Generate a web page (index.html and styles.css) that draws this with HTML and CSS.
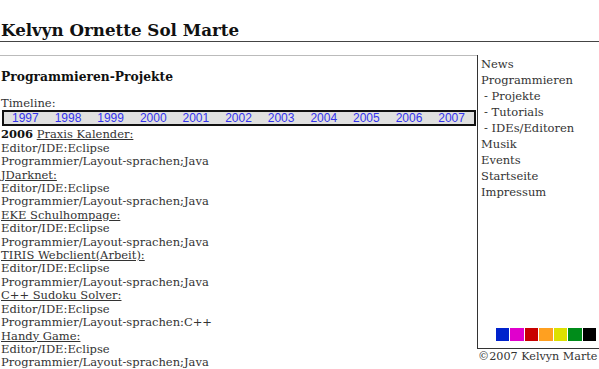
FILE: index.html
```html
<!DOCTYPE html>
<html lang="de">
<head>
  <meta charset="UTF-8">
  <title>Kelvyn Ornette Sol Marte - Programmieren-Projekte</title>
  <link rel="stylesheet" href="styles.css">
</head>
<body>
  <h1 class="site-title">Kelvyn Ornette Sol Marte</h1>
  <div class="page">
    <div class="content">
      <h2>Programmieren-Projekte</h2>
      <div class="timeline-label">Timeline:</div>
      <div class="timeline">
        <a href="#">1997</a>
        <a href="#">1998</a>
        <a href="#">1999</a>
        <a href="#">2000</a>
        <a href="#">2001</a>
        <a href="#">2002</a>
        <a href="#">2003</a>
        <a href="#">2004</a>
        <a href="#">2005</a>
        <a href="#">2006</a>
        <a href="#">2007</a>
      </div>
      <div class="projects">
        <div class="project">
          <b>2006</b> <a href="#">Praxis Kalender:</a><br>
          Editor/IDE:Eclipse<br>
          Programmier/Layout-sprachen;Java
        </div>
        <div class="project">
          <a href="#">JDarknet:</a><br>
          Editor/IDE:Eclipse<br>
          Programmier/Layout-sprachen;Java
        </div>
        <div class="project">
          <a href="#">EKE Schulhompage:</a><br>
          Editor/IDE:Eclipse<br>
          Programmier/Layout-sprachen;Java
        </div>
        <div class="project">
          <a href="#">TIRIS Webclient(Arbeit):</a><br>
          Editor/IDE:Eclipse<br>
          Programmier/Layout-sprachen;Java
        </div>
        <div class="project">
          <a href="#">C++ Sudoku Solver:</a><br>
          Editor/IDE:Eclipse<br>
          Programmier/Layout-sprachen:C++
        </div>
        <div class="project">
          <a href="#">Handy Game:</a><br>
          Editor/IDE:Eclipse<br>
          Programmier/Layout-sprachen;Java
        </div>
      </div>
    </div>
    <div class="side">
      <div class="menu">
        <ul>
          <li><a href="#">News</a></li>
          <li><a href="#">Programmieren</a></li>
          <li class="sub"><a href="#">- Projekte</a></li>
          <li class="sub"><a href="#">- Tutorials</a></li>
          <li class="sub"><a href="#">- IDEs/Editoren</a></li>
          <li><a href="#">Musik</a></li>
          <li><a href="#">Events</a></li>
          <li><a href="#">Startseite</a></li>
          <li><a href="#">Impressum</a></li>
        </ul>
        <div class="colors">
          <span class="c-blue"></span>
          <span class="c-magenta"></span>
          <span class="c-red"></span>
          <span class="c-orange"></span>
          <span class="c-yellow"></span>
          <span class="c-green"></span>
          <span class="c-black"></span>
        </div>
      </div>
      <div class="copy">&copy;2007 Kelvyn Marte</div>
    </div>
  </div>
</body>
</html>
```
FILE: styles.css
```css
body {
  margin: 0;
  font-family: "DejaVu Serif", serif;
  font-size: 11.5px;
  line-height: 13.4px;
  color: #333;
  background: #fff;
}

a {
  color: #333;
}

.site-title {
  margin: 0;
  padding: 21px 0 2px 1px;
  font-size: 16.7px;
  line-height: 18px;
  color: #111;
  border-bottom: 1px solid #444;
}

.page {
  display: flex;
  margin-top: 13px;
}

.content {
  width: 476px;
  border-top: 1px solid #bbb;
  padding-left: 1px;
}

.content h2 {
  margin: 13px 0 12px;
  font-size: 12.3px;
  line-height: 16px;
  color: #111;
}

.timeline {
  display: flex;
  margin: 0 1px;
  border: 2px solid #111;
  background: #e0e0e0;
  padding: 0 9px 0 8px;
  justify-content: space-between;
  line-height: 12px;
}

.timeline a {
  font-family: "Liberation Sans", Arial, sans-serif;
  font-size: 12px;
  color: #3333ee;
  text-decoration: none;
}

.projects {
  padding-top: 2px;
}

.project b {
  color: #111;
}

.side {
  flex: 1;
  min-width: 0;
  display: flex;
  flex-direction: column;
}

.menu {
  border-left: 1px solid #333;
  border-bottom: 1px solid #333;
  height: 293px;
  display: flex;
  flex-direction: column;
  justify-content: space-between;
}

.menu ul {
  list-style: none;
  margin: 0;
  padding: 1px 0 0 3px;
  line-height: 16px;
}

.menu a {
  text-decoration: none;
}

.menu .sub {
  padding-left: 3px;
}

.colors {
  display: flex;
  gap: 1px;
  justify-content: flex-end;
  padding: 0 3px 7px 0;
}

.colors span {
  width: 13.5px;
  height: 13px;
}

.c-blue { background: #0022cc; }
.c-magenta { background: #e000cc; }
.c-red { background: #c80000; }
.c-orange { background: #ffa020; }
.c-yellow { background: #dde000; }
.c-green { background: #008c1a; }
.c-black { background: #000; }

.copy {
  padding: 1px 0 0 1px;
  font-size: 11.2px;
  line-height: 14px;
  white-space: nowrap;
}
```
